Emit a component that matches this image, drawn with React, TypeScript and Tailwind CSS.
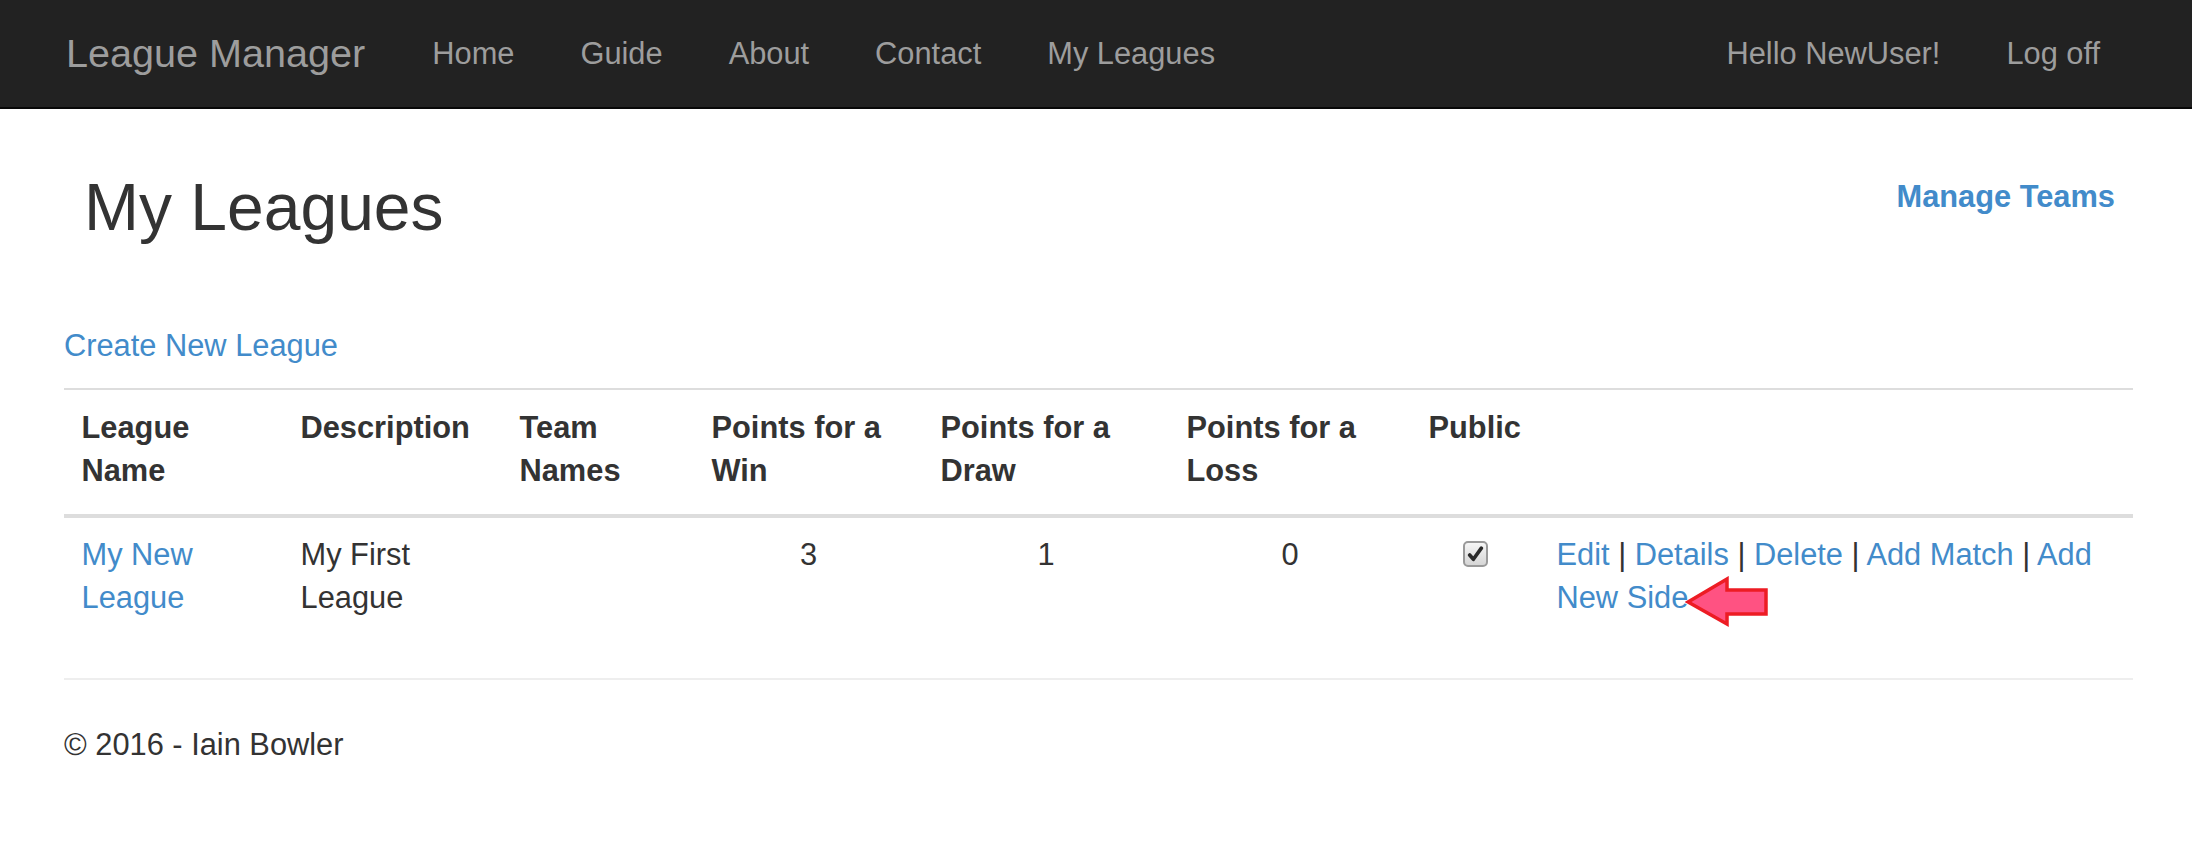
import React from 'react'

const font = { fontFamily: '"Liberation Sans", Arial, Helvetica, sans-serif' }

const navLinks = ['Home', 'Guide', 'About', 'Contact', 'My Leagues']

const columns = [
  { label: 'League Name', w: 'w-[219px]' },
  { label: 'Description', w: 'w-[219px]' },
  { label: 'Team Names', w: 'w-[192px]' },
  { label: 'Points for a Win', w: 'w-[229px]' },
  { label: 'Points for a Draw', w: 'w-[246px]' },
  { label: 'Points for a Loss', w: 'w-[242px]' },
  { label: 'Public', w: 'w-[128px]' },
  { label: '', w: 'w-[594px]' },
]

function Checkbox() {
  return (
    <div className="mx-auto mt-[8px] flex h-[26px] w-[25px] items-center justify-center rounded-[5px] border-2 border-[#9a9a9a] bg-gradient-to-b from-[#f6f6f6] to-[#d6d6d6]">
      <svg width="17" height="17" viewBox="0 0 16 16">
        <path d="M2.5 8.5 L6 12.5 L13.5 2" fill="none" stroke="#2b2b2b" strokeWidth="3.4" strokeLinecap="round" strokeLinejoin="round" />
      </svg>
    </div>
  )
}

function Arrow() {
  // red annotation arrow pointing at the link
  return (
    <span className="relative inline-block h-0 w-0 align-middle">
      <svg
        className="absolute left-[-3px] top-[-24px]"
        width="84"
        height="51"
        viewBox="0 0 84 51"
      >
        <polygon
          points="3,26 42,3 42,14 81,14 81,38 42,38 42,48"
          fill="#ff5282"
          stroke="#ed1c24"
          strokeWidth="3.5"
          strokeLinejoin="miter"
        />
      </svg>
    </span>
  )
}

export default function App() {
  return (
    <div className="min-h-screen bg-white text-[30.8px] leading-[43px] text-[#333]" style={font}>
      <nav className="flex h-[109px] items-center border-b-2 border-[#080808] bg-[#222] pl-[66px] pr-[59px]">
        <a className="text-[39.6px] text-[#9d9d9d]">League Manager</a>
        <ul className="ml-[34px] flex">
          {navLinks.map((l) => (
            <li key={l}>
              <a className="px-[33px] text-[#9d9d9d]">{l}</a>
            </li>
          ))}
        </ul>
        <ul className="ml-auto flex">
          <li>
            <a className="px-[33px] text-[#9d9d9d]">Hello NewUser!</a>
          </li>
          <li>
            <a className="px-[33px] text-[#9d9d9d]">Log off</a>
          </li>
        </ul>
      </nav>

      <div className="pl-[64px] pr-[59px]">
        <div className="mt-[62px] flex items-start justify-between">
          <h2 className="pl-[20px] text-[66px] leading-[72px]">My Leagues</h2>
          <a className="mr-[18px] mt-[4px] font-bold text-[#428bca]">Manage Teams</a>
        </div>

        <p className="mt-[81px]">
          <a className="text-[#428bca]">Create New League</a>
        </p>

        <table className="mt-[21px] w-full table-fixed border-t-2 border-[#ddd]">
          <thead>
            <tr className="border-b-4 border-[#ddd]">
              {columns.map((c) => (
                <th
                  key={c.label}
                  className={`${c.w} whitespace-normal px-[17.5px] pb-[22px] pt-[16px] text-left align-top font-bold`}
                >
                  {c.label}
                </th>
              ))}
            </tr>
          </thead>
          <tbody>
            <tr>
              <td className="px-[17.5px] pb-[18px] pt-[15px] align-top">
                <a className="text-[#428bca]">My New League</a>
              </td>
              <td className="px-[17.5px] pb-[18px] pt-[15px] align-top">My First League</td>
              <td className="px-[17.5px] pb-[18px] pt-[15px] align-top"></td>
              <td className="px-[17.5px] pb-[18px] pt-[15px] text-center align-top">3</td>
              <td className="px-[17.5px] pb-[18px] pt-[15px] text-center align-top">1</td>
              <td className="px-[17.5px] pb-[18px] pt-[15px] text-center align-top">0</td>
              <td className="px-[17.5px] pb-[18px] pt-[15px] align-top">
                <Checkbox />
              </td>
              <td className="px-[17.5px] pb-[18px] pt-[15px] align-top">
                <a className="text-[#428bca]">Edit</a> | <a className="text-[#428bca]">Details</a> |{' '}
                <a className="text-[#428bca]">Delete</a> | <a className="text-[#428bca]">Add Match</a> |{' '}
                <a className="text-[#428bca]">
                  Add New Side
                  <Arrow />
                </a>
              </td>
            </tr>
          </tbody>
        </table>

        <hr className="mt-[41px] border-t-2 border-[#eee]" />

        <footer className="mt-[43px]">
          <p>© 2016 - Iain Bowler</p>
        </footer>
      </div>
    </div>
  )
}
